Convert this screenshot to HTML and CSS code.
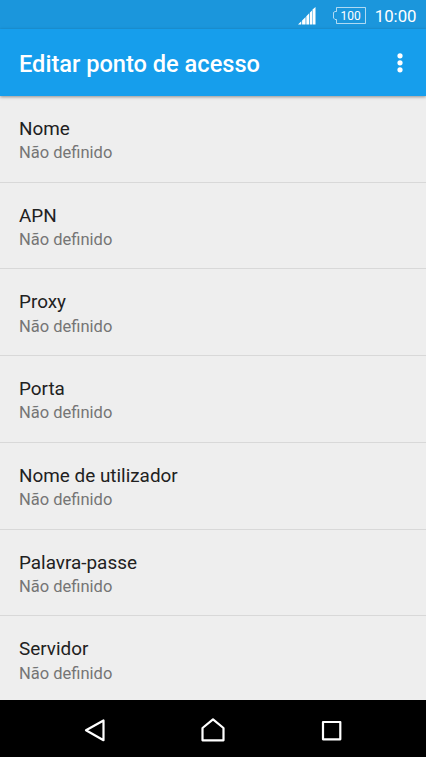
FILE: index.html
```html
<!DOCTYPE html>
<html lang="pt">
<head>
<meta charset="utf-8">
<title>Editar ponto de acesso</title>
<link rel="stylesheet" href="styles.css">
</head>
<body>
<div class="screen">
  <div class="status">
    <svg class="signal" width="18" height="18" viewBox="0 0 18 18"><path d="M0 17.500L3.300 14.200V17.500zM4.100 13.400L7.600 9.900V17.500H4.100zM8.300 9.200L11.200 6.300V17.500H8.300zM11.900 5.600L14 3.500V17.500H11.900zM14.500 2.500L17.500 0V17.500H14.500z" fill="#fff"/></svg>
    <div class="battery"><svg width="33" height="17" viewBox="0 0 33 17"><path d="M3.500 .5H32.500V16.500H3.500V12.500H2L.5 11V5.500L2 4.500H3.500z" fill="none" stroke="#fff" stroke-opacity=".65"/></svg><span class="level">100</span></div>
    <span class="clock">10:00</span>
  </div>
  <header class="bar"><h1>Editar ponto de acesso</h1>
    <svg class="more" width="6" height="20" viewBox="0 0 6 20" fill="#fff"><circle cx="3" cy="2.800" r="2.600"/><circle cx="3" cy="9.800" r="2.600"/><circle cx="3" cy="16.800" r="2.600"/></svg>
  </header>
  <main class="list">
    <div class="item"><div class="name">Nome</div><div class="value">Não definido</div></div>
    <div class="item"><div class="name">APN</div><div class="value">Não definido</div></div>
    <div class="item"><div class="name">Proxy</div><div class="value">Não definido</div></div>
    <div class="item"><div class="name">Porta</div><div class="value">Não definido</div></div>
    <div class="item"><div class="name">Nome de utilizador</div><div class="value">Não definido</div></div>
    <div class="item"><div class="name">Palavra-passe</div><div class="value">Não definido</div></div>
    <div class="item"><div class="name">Servidor</div><div class="value">Não definido</div></div>
  </main>
  <nav class="nav">
    <svg width="24" height="26" viewBox="0 0 24 26"><path d="M20.500 3.500V23.200L3 13.300z"/></svg>
    <svg width="24" height="26" viewBox="0 0 24 26"><path d="M1.500 11L12 2.300 22.500 11V23.300H1.500z"/></svg>
    <svg width="24" height="26" viewBox="0 0 24 26"><path d="M4 5H21.300V22.300H4z"/></svg>
  </nav>
</div>
</body>
</html>
```
FILE: styles.css
```css
body { margin: 0; font-family: Roboto, sans-serif; }
.screen { width: 426px; height: 757px; display: flex; flex-direction: column; overflow: hidden; background: #eee; }
.status { height: 29px; flex: none; box-sizing: border-box; padding: 2px 9.5px 0 0; display: flex; align-items: center; justify-content: flex-end; background: #1b96dc; color: #fff; }
.signal { margin-right: 17px; }
.battery { display: grid; width: 33px; height: 17px; margin: -1px 9px 0 0; }
.battery > * { grid-area: 1 / 1; }
.level { font-size: 12px; line-height: 18px; text-align: center; padding-left: 3px; }
.clock { font-size: 16.8px; line-height: 20px; }
.bar { height: 67px; flex: none; box-sizing: border-box; padding: 0 23px 0 19px; display: flex; align-items: center; justify-content: space-between; background: #169eec; color: #fff; box-shadow: 0 1px 3px rgba(0,0,0,.4); z-index: 1; }
.bar h1 { margin: 3px 0 0; font-size: 23.6px; font-weight: 500; line-height: 30px; }
.list { flex: 1; min-height: 0; overflow: hidden; }
.item { height: 86.72px; box-sizing: border-box; padding: 20px 19px 0; border-bottom: 1px solid #d8d8d8; }
.name { margin-bottom: .2px; font-size: 18.9px; line-height: 25px; color: #212121; }
.value { font-size: 16.5px; line-height: 23px; color: #757575; }
.nav { height: 57px; flex: none; box-sizing: border-box; padding: 3px 83px 0; display: flex; align-items: center; justify-content: space-between; background: #000; }
.nav path { fill: none; stroke: #fff; stroke-width: 2.2; stroke-linejoin: round; }
```
